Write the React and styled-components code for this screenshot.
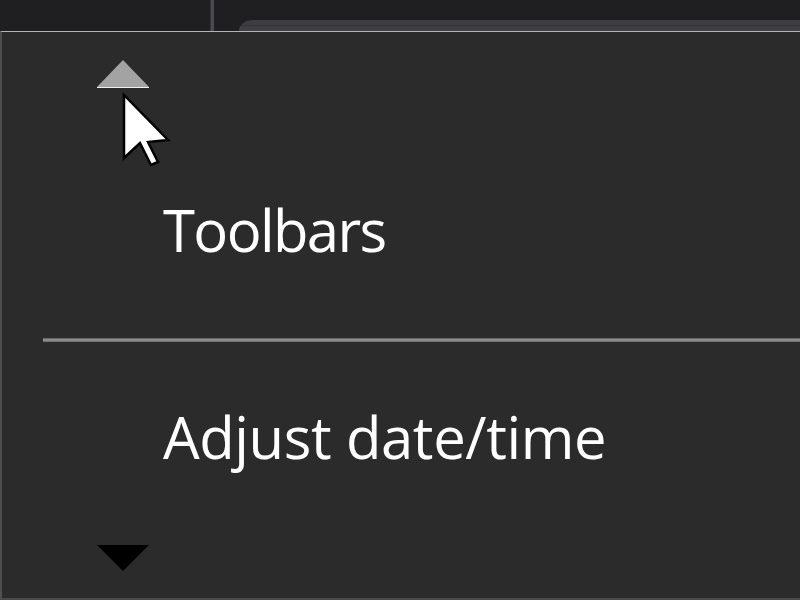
import React from "react";
import styled, { createGlobalStyle } from "styled-components";

const GlobalStyle = createGlobalStyle`
  html, body {
    margin: 0;
    padding: 0;
    background: #1f1f22;
    overflow: hidden;
  }
  #root {
    width: 800px;
    height: 600px;
  }
`;

const Screen = styled.div`
  position: relative;
  width: 800px;
  height: 600px;
  display: flex;
  flex-direction: column;
  background: #1f1f22;
  font-family: "Open Sans", "Noto Sans", sans-serif;
`;

const TopStrip = styled.div`
  height: 31px;
  display: flex;
  align-items: stretch;
  flex-shrink: 0;
`;

const StripDivider = styled.div`
  margin-left: 210px;
  width: 3px;
  background: #4a4a4f;
  border-left: 1px solid #38383c;
`;

const Tab = styled.div`
  margin-left: 25px;
  margin-top: 20px;
  flex: 1;
  background: linear-gradient(#3d3d42 0 5px, #333337 5px 6px, #3e3e43 6px);
  border-top-left-radius: 14px 11px;
`;

const Menu = styled.div`
  flex: 1;
  display: flex;
  flex-direction: column;
  background: #2b2b2b;
  border-top: 1px solid #b4b4b4;
  border-left: 2px solid #4f4f4f;
  border-bottom: 2px solid #4a4a4a;
`;

const ArrowRow = styled.div`
  height: ${(p) => p.h}px;
  flex-shrink: 0;
  padding-left: 95px;
  display: flex;
  align-items: ${(p) => (p.bottom ? "flex-start" : "flex-end")};
`;

const Triangle = styled.div`
  width: 0;
  height: 0;
  border-left: 26px solid transparent;
  border-right: 26px solid transparent;
  ${(p) =>
    p.up
      ? `border-bottom: 27px solid #a3a3a3; box-shadow: 0 1px 0 0 #f0f0f0;`
      : `border-top: 26px solid #000;`}
`;

const Item = styled.div`
  box-sizing: border-box;
  flex-shrink: 0;
  height: ${(p) => p.h}px;
  padding: ${(p) => p.top}px 0 0 161px;
  color: #ffffff;
  font-size: 58px;
  letter-spacing: ${(p) => p.spacing || 0}px;
  line-height: 58px;
  white-space: nowrap;
`;

const Separator = styled.div`
  flex-shrink: 0;
  margin-left: 41px;
  height: 4px;
  background: #8c8c8c;
  border-top: 1px solid #6a6a6a;
  border-bottom: 1px solid #737373;
  box-sizing: border-box;
`;

const Cursor = styled.svg`
  position: absolute;
  left: 0;
  top: 0;
  pointer-events: none;
`;

export default function App() {
  return (
    <>
      <GlobalStyle />
      <Screen>
        <TopStrip>
          <StripDivider />
          <Tab />
        </TopStrip>
        <Menu>
          <ArrowRow h={55}>
            <div>
              <Triangle up />
            </div>
          </ArrowRow>
          <Item h={251} top={114} spacing={-1.6}>
            Toolbars
          </Item>
          <Separator />
          <Item h={203} top={66} spacing={-0.4}>
            Adjust date/time
          </Item>
          <ArrowRow h={40} bottom>
            <Triangle />
          </ArrowRow>
        </Menu>
        <Cursor width="800" height="600">
          <polygon
            points="124,95 124,158 140,143 151,165 158,162 148,142 168,140"
            fill="#ffffff"
            stroke="#000000"
            strokeWidth="2.5"
            strokeLinejoin="miter"
          />
        </Cursor>
      </Screen>
    </>
  );
}
